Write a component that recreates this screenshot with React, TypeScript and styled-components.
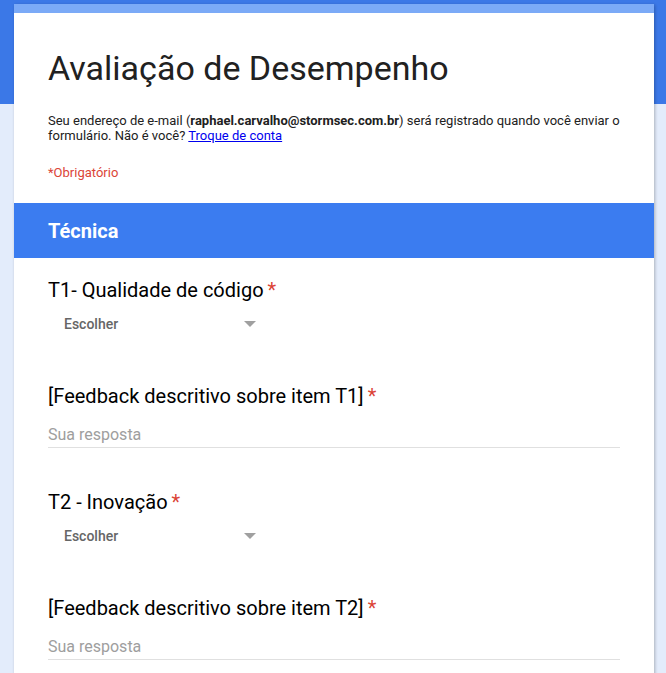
import React from 'react';
import styled, { createGlobalStyle } from 'styled-components';

const GlobalStyle = createGlobalStyle`
  html, body {
    margin: 0;
    padding: 0;
  }
  body {
    font-family: Roboto, "Liberation Sans", Arial, sans-serif;
    background: linear-gradient(to bottom, #3b78e7 0, #3b78e7 104px, #e3ecfb 104px, #e3ecfb 100%);
    min-height: 673px;
  }
`;

const Page = styled.div`
  padding: 4px 12px 0 14px;
`;

const Card = styled.div`
  width: 640px;
  background: #fff;
  box-shadow: 1px 1px 3px rgba(0, 0, 0, 0.25);
`;

const TopStrip = styled.div`
  height: 9px;
  background: #7baaf7;
`;

const Header = styled.div`
  padding: 35px 34px 23px;
`;

const Title = styled.h1`
  margin: 0;
  font-size: 34px;
  font-weight: 400;
  line-height: 40px;
  color: #212121;
`;

const Description = styled.p`
  margin: 25px 0 0;
  font-size: 13px;
  line-height: 15px;
  color: #212121;

  b {
    font-weight: 700;
  }

  a {
    color: #0000ee;
    text-decoration: underline;
  }
`;

const Required = styled.div`
  margin-top: 22px;
  font-size: 13px;
  line-height: 15px;
  color: #db4437;
`;

const SectionHeader = styled.div`
  height: 55px;
  background: #3b7cf0;
  display: flex;
  align-items: center;
  padding: 0 34px;
  font-size: 20px;
  font-weight: 700;
  color: #fff;
`;

const Questions = styled.div`
  padding: 20px 34px 0;
`;

const Question = styled.div<{ $gap: number }>`
  padding-bottom: ${(p) => p.$gap}px;
`;

const QuestionTitle = styled.div`
  font-size: 20px;
  line-height: 24px;
  color: #000;

  span {
    color: #db4437;
    margin-left: 4px;
  }
`;

const Select = styled.div`
  display: flex;
  align-items: center;
  justify-content: space-between;
  width: 192px;
  height: 24px;
  margin-top: 10px;
  padding-left: 16px;
  font-size: 14px;
  font-weight: 500;
  color: #666;
`;

const Arrow = styled.div`
  width: 0;
  height: 0;
  border-left: 6px solid transparent;
  border-right: 6px solid transparent;
  border-top: 6px solid #a0a0a0;
`;

const Answer = styled.div`
  margin-top: 17px;
  padding-bottom: 2px;
  border-bottom: 1px solid #e0e0e0;
  font-size: 16px;
  line-height: 20px;
  color: #9e9e9e;
`;

const questions = [
  { title: 'T1- Qualidade de código', feedback: '[Feedback descritivo sobre item T1]' },
  { title: 'T2 - Inovação', feedback: '[Feedback descritivo sobre item T2]' },
];

const App: React.FC = () => {
  return (
    <>
      <GlobalStyle />
      <Page>
        <Card>
          <TopStrip />
          <Header>
            <Title>Avaliação de Desempenho</Title>
            <Description>
              Seu endereço de e-mail (<b>raphael.carvalho@stormsec.com.br</b>) será registrado quando você enviar o
              formulário. Não é você? <a href="#">Troque de conta</a>
            </Description>
            <Required>*Obrigatório</Required>
          </Header>
          <SectionHeader>Técnica</SectionHeader>
          <Questions>
            {questions.map((q) => (
              <React.Fragment key={q.title}>
                <Question $gap={48}>
                  <QuestionTitle>
                    {q.title}
                    <span>*</span>
                  </QuestionTitle>
                  <Select>
                    Escolher
                    <Arrow />
                  </Select>
                </Question>
                <Question $gap={42}>
                  <QuestionTitle>
                    {q.feedback}
                    <span>*</span>
                  </QuestionTitle>
                  <Answer>Sua resposta</Answer>
                </Question>
              </React.Fragment>
            ))}
          </Questions>
        </Card>
      </Page>
    </>
  );
};

export default App;
